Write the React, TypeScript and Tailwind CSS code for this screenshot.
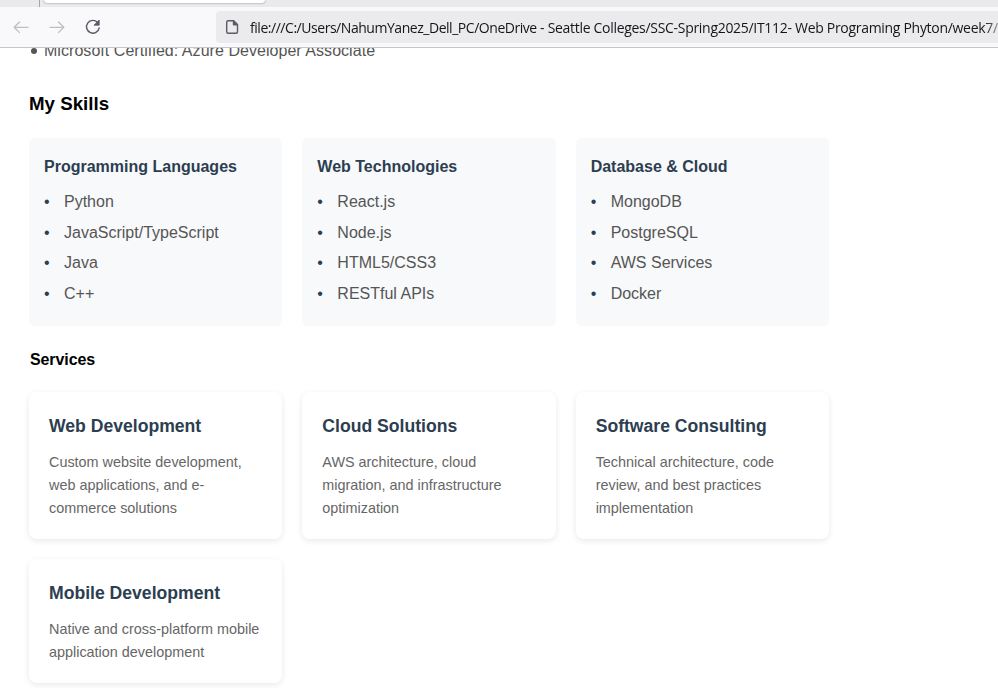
const skills = [
  { title: 'Programming Languages', items: ['Python', 'JavaScript/TypeScript', 'Java', 'C++'] },
  { title: 'Web Technologies', items: ['React.js', 'Node.js', 'HTML5/CSS3', 'RESTful APIs'] },
  { title: 'Database & Cloud', items: ['MongoDB', 'PostgreSQL', 'AWS Services', 'Docker'] },
];

const services = [
  { title: 'Web Development', text: 'Custom website development, web applications, and e-commerce solutions' },
  { title: 'Cloud Solutions', text: 'AWS architecture, cloud migration, and infrastructure optimization' },
  { title: 'Software Consulting', text: 'Technical architecture, code review, and best practices implementation' },
  { title: 'Mobile Development', text: 'Native and cross-platform mobile application development' },
];

function BrowserBar() {
  return (
    <header className="h-12 shrink-0 overflow-hidden border-b border-[#c4c4ca] bg-[#f9f9fb]">
      <div className="flex h-[7px] bg-[#eaeaec]">
        <div className="mr-[4px] w-10 border-r border-[#a5a5aa]" />
        <div className="h-[3px] w-[221px] rounded-b-[4px] bg-white shadow-[0_0_2px_rgba(0,0,0,0.5)]" />
      </div>
      <div className="flex h-10 items-center">
        <svg className="ml-[13px] h-4 w-4 shrink-0" viewBox="0 0 16 16" fill="none" stroke="#bebec1" strokeWidth="1.3" strokeLinecap="round" strokeLinejoin="round">
          <path d="M15 8.3H1.2M6.5 3 1.2 8.3l5.3 5.3" />
        </svg>
        <svg className="ml-5 h-4 w-4 shrink-0" viewBox="0 0 16 16" fill="none" stroke="#bebec1" strokeWidth="1.3" strokeLinecap="round" strokeLinejoin="round">
          <path d="M1 8.3h13.8M9.5 3l5.3 5.3-5.3 5.3" />
        </svg>
        <svg className="ml-5 h-4 w-4 shrink-0" viewBox="0 0 16 16" fill="none">
          <path d="M14.2 8.9A6.4 6.4 0 1 1 12.6 3.4" stroke="#5b5b66" strokeWidth="1.4" strokeLinecap="round" />
          <path d="M14.2 1v5.2H9z" fill="#5b5b66" stroke="#5b5b66" strokeWidth=".8" strokeLinejoin="round" />
        </svg>
        <div className="ml-[115px] flex h-8 flex-1 items-center overflow-hidden rounded-l-[4px] bg-[#ebebed]">
          <svg className="ml-2 h-4 w-4 shrink-0" viewBox="0 0 16 16" fill="none" stroke="#5b5b66" strokeWidth="1.4" strokeLinejoin="round">
            <path d="M4.2 1.7h5.3l4 4v7.1a1.5 1.5 0 0 1-1.5 1.5H4.2a1.5 1.5 0 0 1-1.5-1.5V3.2a1.5 1.5 0 0 1 1.5-1.5z" />
            <path d="M9.5 1.7v4h4z" fill="#5b5b66" />
          </svg>
          <span className="ml-[10px] pt-[2px] whitespace-nowrap bg-gradient-to-r from-[#15141a] from-98% to-[#8a8a90] bg-clip-text font-['Open_Sans','Noto_Sans',sans-serif] text-[14px] tracking-[-0.3px] text-transparent">
            <span className="tracking-[-0.46px]">file:///C:/Users/NahumYanez_Dell_PC/OneDrive</span> - Seattle Colleges/SSC-Spring2025/IT112- Web Programing Phyton/week7/
          </span>
        </div>
      </div>
    </header>
  );
}

export default function App() {
  return (
    <div className="flex h-[688px] w-[998px] flex-col overflow-hidden bg-white font-['Liberation_Sans',Arial,sans-serif] text-base leading-[25.6px]">
      <BrowserBar />
      <main className="min-h-0 flex-1 overflow-hidden">
        <div className="ml-[29px] w-[800px]">
          <ul className="-mt-[10px] text-[#555]">
            <li className="flex items-center tracking-[0.045px]">
              <span className="mt-px mr-[7.5px] ml-[1.5px] size-[6px] rounded-full bg-[#555]" />
              Microsoft Certified: Azure Developer Associate
            </li>
          </ul>
          <h2 className="mt-[25px] text-[18.72px] leading-[30px] font-bold text-black">My Skills</h2>
          <div className="mt-[19px] grid grid-cols-3 gap-5">
            {skills.map((skill) => (
              <section key={skill.title} className="rounded-[5px] bg-[#f8f9fb] px-[15px] pt-4 pb-[14px]">
                <h3 className="mb-[10px] font-bold text-[#2c3e50]">{skill.title}</h3>
                <ul>
                  {skill.items.map((item) => (
                    <li key={item} className="mb-[5px] flex text-[#555]">
                      <span className="w-5 text-[#2c3e50]">•</span>
                      {item}
                    </li>
                  ))}
                </ul>
              </section>
            ))}
          </div>
          <h2 className="mt-[21px] pl-px font-bold tracking-[-0.1px] text-black">Services</h2>
          <div className="mt-[19.6px] grid grid-cols-3 gap-5">
            {services.map((service) => (
              <section key={service.title} className="rounded-[8px] bg-white px-5 pt-[20.2px] pb-[18.7px] shadow-[0_2px_6px_rgba(0,0,0,0.09)]">
                <h3 className="mb-[10.7px] text-[17.6px] leading-[28.2px] font-bold text-[#2c3e50]">{service.title}</h3>
                <p className="text-[14.4px] leading-[23.04px] text-[#666]">{service.text}</p>
              </section>
            ))}
          </div>
        </div>
      </main>
    </div>
  );
}
